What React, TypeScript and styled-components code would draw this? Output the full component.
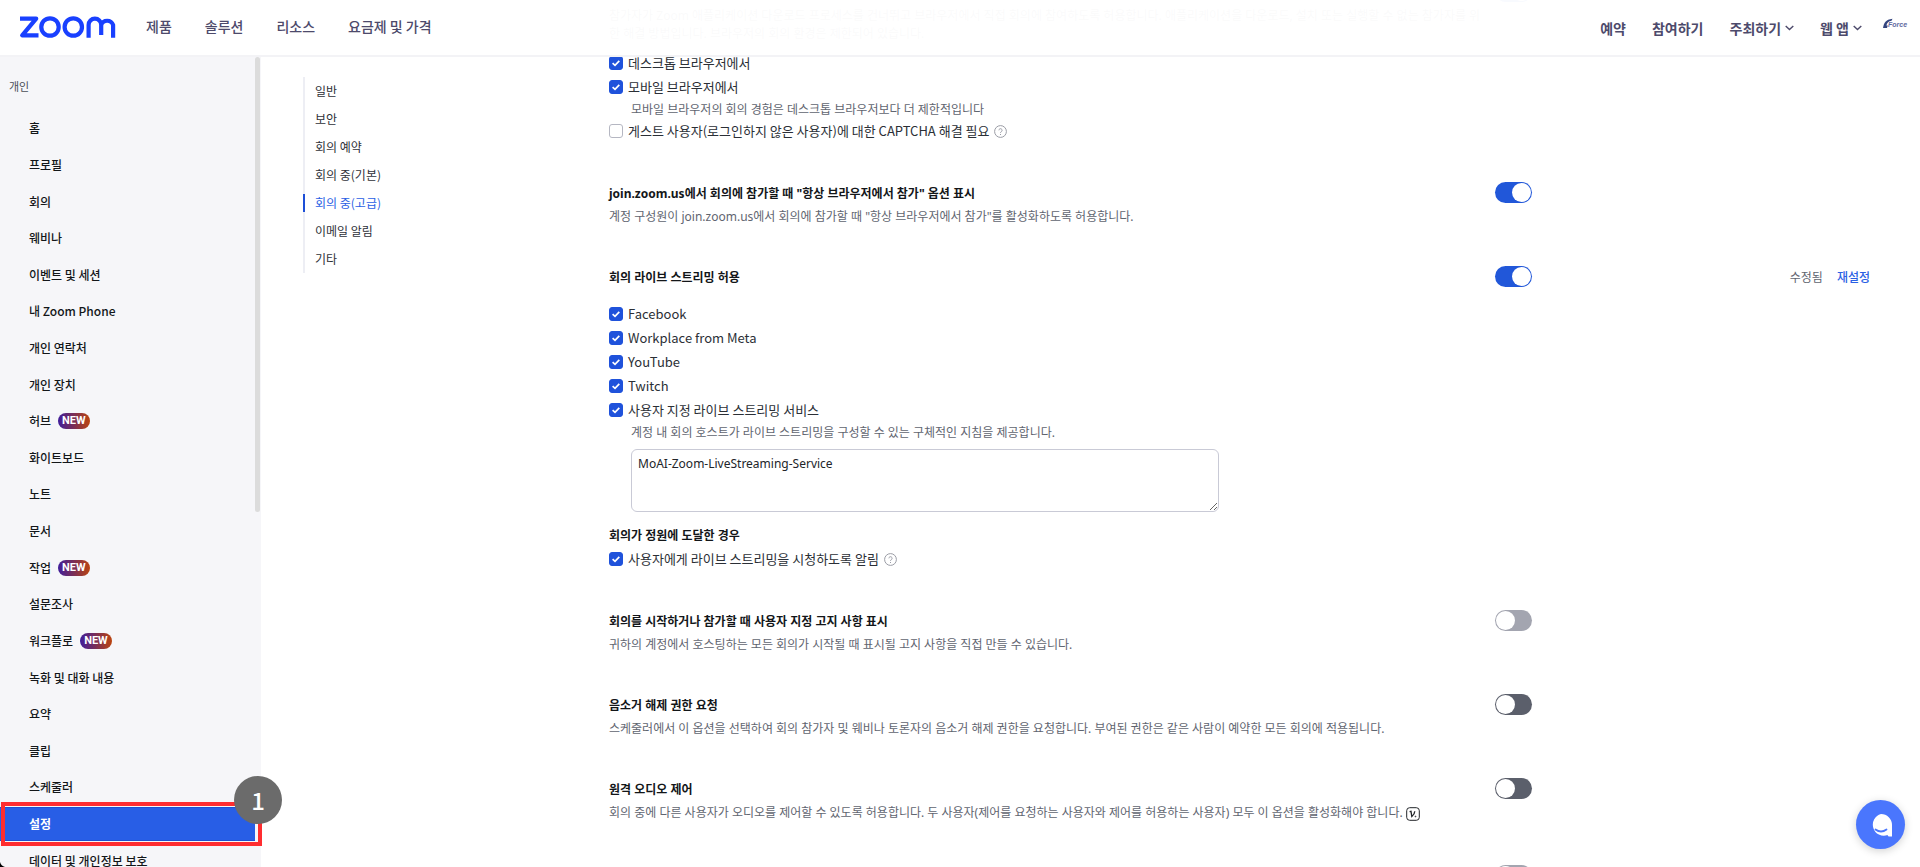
import React, { useState } from 'react';
import styled, { createGlobalStyle } from 'styled-components';

const GlobalStyle = createGlobalStyle`
  *, *::before, *::after { box-sizing: border-box; }
  body {
    margin: 0;
    background: #fff;
    color: #131619;
    font-family: 'Noto Sans', 'Noto Sans CJK KR', sans-serif;
    font-size: 12px;
    line-height: 18px;
  }
  a { color: inherit; text-decoration: none; }
  h2, h3, p, ul { margin: 0; padding: 0; }
  ul { list-style: none; }
`;

const Page = styled.div`
  position: relative;
  display: flex;
  height: 100vh;
  overflow: hidden;
`;

const Header = styled.header`
  position: absolute;
  inset: 0 0 auto 0;
  z-index: 2;
  display: flex;
  align-items: center;
  height: 57px;
  padding: 0 12px 2px 19px;
  border-bottom: 2px solid #f3f3f6;
  background: rgba(255, 255, 255, 0.97);
  color: #4d4a6b;
  font-family: 'Noto Sans CJK KR', sans-serif;
  font-size: 14px;
  line-height: 20px;
`;

const LogoLink = styled.a`
  display: flex;
  margin-right: 30px;
`;

const PrimaryNav = styled.nav`
  display: flex;
  gap: 33px;
  padding-bottom: 2px;
  font-weight: 500;
`;

const AccountNav = styled.nav`
  display: flex;
  align-items: center;
  gap: 26px;
  margin-left: auto;
  padding-top: 2px;
  font-weight: 700;
`;

const MenuButton = styled.button`
  display: flex;
  align-items: center;
  gap: 4px;
  padding: 0;
  border: 0;
  background: none;
  color: inherit;
  font: inherit;
  cursor: pointer;
`;

const AccountLogo = styled.a`
  display: flex;
  align-self: flex-start;
  margin-left: -5px;
`;

const Sidebar = styled.aside`
  position: relative;
  flex: 0 0 261px;
  padding-top: 76px;
  background: #f6f6f9;
`;

const SidebarScroll = styled.div`
  position: absolute;
  top: 57px;
  right: 1px;
  width: 5px;
  height: 455px;
  border-radius: 3px;
  background: #dcdcdc;
`;

const SidebarTitle = styled.h2`
  padding-left: 9px;
  margin-bottom: 14px;
  color: #4a4e57;
  font-family: 'Noto Sans CJK KR', sans-serif;
  font-size: 11px;
  font-weight: 400;
  line-height: 20px;
`;

const SidebarList = styled.ul`
  display: grid;
  grid-auto-rows: 1fr;
  height: 769px;
  padding-right: 6px;
`;

const SidebarItem = styled.li`
  position: relative;
  display: flex;
  align-items: center;
`;

const SidebarLink = styled.a<{ $active?: boolean }>`
  display: flex;
  align-items: center;
  gap: 7px;
  width: 100%;
  height: 34px;
  padding-left: 29px;
  background: ${(p) => (p.$active ? '#285ee6' : 'transparent')};
  border-block: 1px solid ${(p) => (p.$active ? '#1f50cf' : 'transparent')};
  color: ${(p) => (p.$active ? '#fff' : '#131619')};
  font-family: 'Noto Sans CJK KR', sans-serif;
  font-weight: ${(p) => (p.$active ? 700 : 500)};
`;

const NewBadge = styled.span`
  padding: 0 4px;
  border-radius: 8px;
  background: linear-gradient(90deg, #3f1d9b, #7c2f55 50%, #bb440f);
  color: #fff;
  font-family: Roboto, sans-serif;
  font-size: 11px;
  font-weight: 700;
  line-height: 16px;
`;

const Highlight = styled.span`
  position: absolute;
  inset: -4px -7px -4px 1px;
  border: 4px solid #ff2d30;
  pointer-events: none;
`;

const StepMarker = styled.span`
  position: absolute;
  top: -30px;
  right: -27px;
  display: grid;
  place-items: center;
  width: 48px;
  height: 48px;
  border-radius: 50%;
  background: #6b6b6b;
  color: #fff;
  font-family: 'Noto Sans CJK KR', sans-serif;
  font-size: 24px;
  font-weight: 500;
`;

const CornerMark = styled.svg`
  position: absolute;
  left: 0;
  bottom: 0;
`;

const Main = styled.main`
  display: flex;
  flex: 1;
  min-width: 0;
  padding-right: 50px;
`;

const SectionNav = styled.nav`
  flex: 0 0 306px;
  margin: 77px 0 0 42px;
`;

const SectionNavList = styled.ul`
  border-left: 2px solid #edeef4;
`;

const SectionNavLink = styled.a<{ $active?: boolean }>`
  position: relative;
  display: block;
  padding-left: 10px;
  color: ${(p) => (p.$active ? '#2a60e4' : '#2e3138')};
  font-family: 'Noto Sans CJK KR', sans-serif;
  line-height: 28px;

  &::before {
    content: '';
    position: absolute;
    top: 5px;
    left: -2px;
    width: 2px;
    height: 18px;
    background: ${(p) => (p.$active ? '#1d4fd7' : 'transparent')};
  }
`;

const Settings = styled.div`
  flex: 1;
  min-width: 0;
  margin-top: -19px;
`;

const SettingRow = styled.section`
  display: grid;
  grid-template-columns: minmax(0, 1fr) 37px 338px;
  margin-bottom: 39px;
`;

const SettingBody = styled.div`
  padding-right: 10px;
`;

const Title = styled.h3`
  color: #131619;
  font-size: 12px;
  font-weight: 700;
  line-height: 24px;
`;

const SubTitle = styled(Title)`
  margin-top: 13px;
  line-height: 22px;
`;

const Description = styled.p`
  margin-top: 2px;
  padding-bottom: 1px;
  color: #5f6570;
`;

const CheckGroup = styled.div<{ $spaced?: boolean }>`
  margin-top: ${(p) => (p.$spaced ? 12 : 7)}px;
`;

const CheckRow = styled.div`
  display: flex;
  align-items: center;
  gap: 5px;
  height: 24px;
`;

const CheckLabel = styled.label`
  display: flex;
  align-items: center;
  gap: 5px;
  color: #2b2f36;
  font-family: 'Noto Sans CJK KR', sans-serif;
  font-size: 13px;
  cursor: pointer;
`;

const CheckBox = styled.input`
  appearance: none;
  width: 14px;
  height: 14px;
  margin: 0;
  border: 1px solid #b5b7c2;
  border-radius: 3px;
  background: #fff;

  &:checked {
    border-color: #1f52db;
    background: #1f52db
      url("data:image/svg+xml,%3Csvg xmlns='http://www.w3.org/2000/svg' viewBox='0 0 12 12'%3E%3Cpath d='M2.6 6.2 5 8.4 9.3 3.9' fill='none' stroke='white' stroke-width='1.7'/%3E%3C/svg%3E")
      center / 12px no-repeat;
  }
`;

const Note = styled.p`
  padding: 2px 0 0 22px;
  color: #5f6570;
`;

const Instructions = styled.textarea`
  display: block;
  width: calc(100% - 288px);
  min-width: 240px;
  height: 63px;
  margin: 7px 0 0 22px;
  padding: 5px 6px;
  border: 1px solid #c9cad6;
  border-radius: 6px;
  background: #fff;
  color: #222529;
  font: inherit;
  resize: both;
`;

const IconButton = styled.button`
  display: inline-flex;
  padding: 0;
  border: 0;
  background: none;
  cursor: pointer;
`;

const InlineIconButton = styled(IconButton)`
  padding: 3px 0 4px;
  vertical-align: top;
`;

const Toggle = styled.input`
  appearance: none;
  position: relative;
  width: 37px;
  height: 21px;
  margin: 0;
  border-radius: 11px;
  background: #5b5f6b;
  cursor: pointer;

  &::before {
    content: '';
    position: absolute;
    top: 1px;
    left: 1px;
    width: 19px;
    height: 19px;
    border-radius: 50%;
    background: #fff;
  }
  &:checked { background: #2157d9; }
  &:checked::before { left: 17px; }
  &:disabled { background: #a3a5b0; }
`;

const Status = styled.div`
  display: flex;
  justify-content: flex-end;
  gap: 14px;
  font-family: 'Noto Sans CJK KR', sans-serif;
  line-height: 21px;
  color: #5f6570;
`;

const ResetLink = styled.a`
  color: #2a60e4;
  font-weight: 500;
`;

const ChatButton = styled.button`
  position: absolute;
  right: 15px;
  bottom: 18px;
  display: grid;
  place-items: center;
  width: 49px;
  height: 49px;
  padding: 0;
  border: 0;
  border-radius: 50%;
  background: #4a76fd;
  box-shadow: 0 2px 8px rgba(0, 0, 0, 0.18);
  cursor: pointer;
`;

const ZoomLogo = () => (
  <svg width="97" height="24" viewBox="0 0 97 24" role="img" aria-label="Zoom" fill="none" stroke="#1940ff" strokeWidth="4.2">
    <path d="M1 3.6H17.2L3.2 20.4H19.5" strokeLinejoin="round" />
    <circle cx="31" cy="12" r="8.7" />
    <circle cx="54.3" cy="12" r="8.7" />
    <path d="M69.6 22.8V10a6.3 6.3 0 0 1 12.6 0V20M82.2 10a6.3 6.3 0 0 1 11.9 0V22.8" />
  </svg>
);

const Chevron = () => (
  <svg width="9" height="6" viewBox="0 0 9 6" fill="none" stroke="currentColor" strokeWidth="1.4" aria-hidden="true">
    <path d="M.7.9 4.5 4.6 8.3.9" />
  </svg>
);

const ForceLogo = () => (
  <svg width="25" height="12" viewBox="0 0 25 12" role="img" aria-label="GForce">
    <path d="M0 10C1 5 2.500 1.500 9.500 .8L8.500 2.800C5.500 3.200 4 4.800 3.400 7.500H4.800L4 10Z" fill="#34457f" />
    <text x="5" y="9" fontFamily="Liberation Sans" fontSize="7" fontStyle="italic" fontWeight="700" fill="#5f6a9f">Force</text>
  </svg>
);

const Help = () => (
  <IconButton type="button" aria-label="도움말">
    <svg width="13" height="13" viewBox="0 0 13 13" fill="none" stroke="#9a9ca5" aria-hidden="true">
      <circle cx="6.500" cy="6.500" r="5.900" />
      <path d="M4.900 5.300a1.600 1.600 0 1 1 2.400 1.400c-.6.3-.8.6-.8 1.200M6.500 9v1" />
    </svg>
  </IconButton>
);

const VersionIcon = () => (
  <InlineIconButton type="button" aria-label="버전 정보">
    <svg width="14" height="14" viewBox="0 0 14 14" fill="none" stroke="#222529" aria-hidden="true">
      <rect x=".7" y=".7" width="12.600" height="12.600" rx="3" />
      <path d="M3.600 4.600 5 4.300 5.800 9.500C7.500 8 8.800 6.200 8.800 4.300" strokeWidth="1.300" />
      <circle cx="9.500" cy="9.500" r=".4" />
    </svg>
  </InlineIconButton>
);

const sidebarItems: { label: string; isNew?: boolean }[] = [
  { label: '홈' },
  { label: '프로필' },
  { label: '회의' },
  { label: '웨비나' },
  { label: '이벤트 및 세션' },
  { label: '내 Zoom Phone' },
  { label: '개인 연락처' },
  { label: '개인 장치' },
  { label: '허브', isNew: true },
  { label: '화이트보드' },
  { label: '노트' },
  { label: '문서' },
  { label: '작업', isNew: true },
  { label: '설문조사' },
  { label: '워크플로', isNew: true },
  { label: '녹화 및 대화 내용' },
  { label: '요약' },
  { label: '클립' },
  { label: '스케줄러' },
  { label: '설정' },
  { label: '데이터 및 개인정보 보호' },
];

const sections = ['일반', '보안', '회의 예약', '회의 중(기본)', '회의 중(고급)', '이메일 알림', '기타'];
const services = ['Facebook', 'Workplace from Meta', 'YouTube', 'Twitch', '사용자 지정 라이브 스트리밍 서비스'];

const Check = ({ label, off, help }: { label: string; off?: boolean; help?: boolean }) => (
  <CheckRow>
    <CheckLabel>
      <CheckBox type="checkbox" defaultChecked={!off} />
      {label}
    </CheckLabel>
    {help && <Help />}
  </CheckRow>
);

type SettingProps = {
  name: string;
  title?: string;
  on?: boolean;
  disabled?: boolean;
  description?: React.ReactNode;
  status?: React.ReactNode;
  children?: React.ReactNode;
};

const Setting = ({ name, title, on, disabled, description, status, children }: SettingProps) => {
  const [checked, setChecked] = useState(!!on);
  return (
    <SettingRow>
      <SettingBody>
        {title && <Title>{title}</Title>}
        {description && <Description>{description}</Description>}
        {children}
      </SettingBody>
      <Toggle
        type="checkbox"
        role="switch"
        aria-label={name}
        checked={checked}
        disabled={disabled}
        onChange={(e) => setChecked(e.target.checked)}
      />
      {status && <Status>{status}</Status>}
    </SettingRow>
  );
};

export default function App() {
  return (
    <Page>
      <GlobalStyle />
      <Header>
        <LogoLink href="#"><ZoomLogo /></LogoLink>
        <PrimaryNav aria-label="기본 메뉴">
          <a href="#">제품</a>
          <a href="#">솔루션</a>
          <a href="#">리소스</a>
          <a href="#">요금제 및 가격</a>
        </PrimaryNav>
        <AccountNav aria-label="계정 메뉴">
          <a href="#">예약</a>
          <a href="#">참여하기</a>
          <MenuButton type="button">주최하기 <Chevron /></MenuButton>
          <MenuButton type="button">웹 앱 <Chevron /></MenuButton>
          <AccountLogo href="#"><ForceLogo /></AccountLogo>
        </AccountNav>
      </Header>

      <Sidebar>
        <SidebarTitle>개인</SidebarTitle>
        <SidebarList>
          {sidebarItems.map(({ label, isNew }) => (
            <SidebarItem key={label}>
              <SidebarLink href="#" $active={label === '설정'}>
                {label}
                {isNew && <NewBadge>NEW</NewBadge>}
              </SidebarLink>
              {label === '설정' && (
                <>
                  <Highlight />
                  <StepMarker>1</StepMarker>
                </>
              )}
            </SidebarItem>
          ))}
        </SidebarList>
        <SidebarScroll />
      </Sidebar>

      <Main>
        <SectionNav aria-label="설정 구역">
          <SectionNavList>
            {sections.map((s) => (
              <li key={s}>
                <SectionNavLink href="#" $active={s === '회의 중(고급)'}>{s}</SectionNavLink>
              </li>
            ))}
          </SectionNavList>
        </SectionNav>

        <Settings>
          <Setting
            name="브라우저에서 참가"
            title={'\u00a0'}
            on
            description="참가자가 Zoom 애플리케이션 다운로드 프로세스를 건너뛰고 브라우저에서 직접 회의에 참여하도록 허용합니다. 애플리케이션을 다운로드, 설치 또는 실행할 수 없는 참가자를 위한 해결 방법입니다. 브라우저의 회의 환경은 제한되어 있습니다."
          >
            <CheckGroup>
              <Check label="데스크톱 브라우저에서" />
              <Check label="모바일 브라우저에서" />
              <Note>모바일 브라우저의 회의 경험은 데스크톱 브라우저보다 더 제한적입니다</Note>
              <Check label="게스트 사용자(로그인하지 않은 사용자)에 대한 CAPTCHA 해결 필요" off help />
            </CheckGroup>
          </Setting>

          <Setting
            name="항상 브라우저에서 참가"
            title={'join.zoom.us에서 회의에 참가할 때 "항상 브라우저에서 참가" 옵션 표시'}
            on
            description={'계정 구성원이 join.zoom.us에서 회의에 참가할 때 "항상 브라우저에서 참가"를 활성화하도록 허용합니다.'}
          />

          <Setting
            name="회의 라이브 스트리밍 허용"
            title="회의 라이브 스트리밍 허용"
            on
            status={
              <>
                <span>수정됨</span>
                <ResetLink href="#">재설정</ResetLink>
              </>
            }
          >
            <CheckGroup $spaced>
              {services.map((s) => <Check key={s} label={s} />)}
              <Note id="stream-note">계정 내 회의 호스트가 라이브 스트리밍을 구성할 수 있는 구체적인 지침을 제공합니다.</Note>
              <Instructions aria-labelledby="stream-note" defaultValue="MoAI-Zoom-LiveStreaming-Service" />
            </CheckGroup>
            <SubTitle>회의가 정원에 도달한 경우</SubTitle>
            <Check label="사용자에게 라이브 스트리밍을 시청하도록 알림" help />
          </Setting>

          <Setting
            name="사용자 지정 고지 사항"
            title="회의를 시작하거나 참가할 때 사용자 지정 고지 사항 표시"
            disabled
            description="귀하의 계정에서 호스팅하는 모든 회의가 시작될 때 표시될 고지 사항을 직접 만들 수 있습니다."
          />

          <Setting
            name="음소거 해제 권한 요청"
            title="음소거 해제 권한 요청"
            description="스케줄러에서 이 옵션을 선택하여 회의 참가자 및 웨비나 토론자의 음소거 해제 권한을 요청합니다. 부여된 권한은 같은 사람이 예약한 모든 회의에 적용됩니다."
          />

          <Setting
            name="원격 오디오 제어"
            title="원격 오디오 제어"
            description={
              <>
                회의 중에 다른 사용자가 오디오를 제어할 수 있도록 허용합니다. 두 사용자(제어를 요청하는 사용자와 제어를 허용하는 사용자) 모두 이 옵션을 활성화해야 합니다.{' '}
                <VersionIcon />
              </>
            }
          />

          <Setting name="추가 설정" disabled />
        </Settings>
      </Main>

      <CornerMark width="5" height="5" viewBox="0 0 5 5" aria-hidden="true">
        <path d="M0 0Q1 4 5 5H0Z" fill="#000" />
      </CornerMark>

      <ChatButton type="button" aria-label="채팅">
        <svg width="24" height="24" viewBox="0 0 24 24" aria-hidden="true">
          <path d="M12 1a11 11 0 0 1 11 11v11.500h-2.500a2 2 0 0 1-2-1.500A11 11 0 1 1 12 1Z" fill="#fff" />
          <path d="M6.500 16.500q5.500 4 11 0" fill="none" stroke="#4a76fd" strokeWidth="1.800" strokeLinecap="round" />
        </svg>
      </ChatButton>
    </Page>
  );
}
